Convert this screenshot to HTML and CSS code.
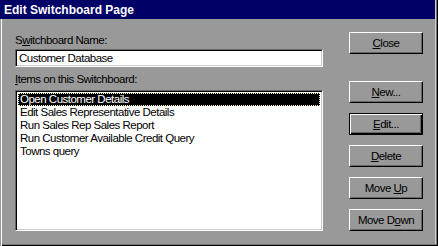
FILE: index.html
```html
<!DOCTYPE html>
<html lang="en">
<head>
    <meta charset="UTF-8">
    <title>Edit Switchboard Page</title>
    <link rel="stylesheet" href="styles.css">
</head>
<body>
    <div class="window">
        <div class="title-bar">Edit Switchboard Page</div>
        <div class="dialog">
            <div class="left-col">
                <label class="field-label">S<u>w</u>itchboard Name:</label>
                <div class="text-field">Customer Database</div>
                <label class="field-label items-label"><u>I</u>tems on this Switchboard:</label>
                <ul class="item-list">
                    <li class="selected">Open Customer Details</li>
                    <li>Edit Sales Representative Details</li>
                    <li>Run Sales Rep Sales Report</li>
                    <li>Run Customer Available Credit Query</li>
                    <li>Towns query</li>
                </ul>
            </div>
            <div class="right-col">
                <button class="btn"><u>C</u>lose</button>
                <button class="btn first-action"><u>N</u>ew...</button>
                <button class="btn default"><u>E</u>dit...</button>
                <button class="btn"><u>D</u>elete</button>
                <button class="btn">Move <u>U</u>p</button>
                <button class="btn">Move D<u>o</u>wn</button>
            </div>
        </div>
    </div>
</body>
</html>
```

FILE: styles.css
```css
body {
    margin: 0;
    padding: 0;
    background: #999999;
    font-family: "Liberation Sans", Arial, sans-serif;
    font-size: 11.5px;
    letter-spacing: -0.5px;
    color: #000;
}

.window {
    width: 438px;
    height: 246px;
    box-sizing: border-box;
    background: #999999;
    box-shadow:
        inset 1px 0 #999999,
        inset 2px 0 #ffffff,
        inset -1px -1px #000000,
        inset -2px -2px #777777,
        inset -3px 0 #cccccc;
}

.title-bar {
    height: 19px;
    width: 435px;
    box-sizing: border-box;
    padding: 1px 0 0 4px;
    line-height: 18px;
    background: #000066;
    color: #fff;
    font-size: 12px;
    font-weight: bold;
    letter-spacing: 0;
}

.dialog {
    display: flex;
    padding-left: 15px;
    gap: 26px;
}

.left-col {
    width: 308px;
    padding-top: 15px;
    display: flex;
    flex-direction: column;
}

.field-label {
    display: block;
    line-height: 13px;
    height: 13px;
}

.text-field {
    margin-top: 2px;
    height: 18px;
    box-sizing: border-box;
    background: #fff;
    border: 1px solid;
    border-color: #666 #fff #fff #666;
    box-shadow: inset 1px 1px #000, inset -1px -1px #ccc;
    padding: 1px 3px;
    line-height: 14px;
}

.items-label {
    margin-top: 6px;
}

.item-list {
    list-style: none;
    margin: 4px 0 0;
    padding: 2px 2px 0;
    height: 141px;
    box-sizing: border-box;
    background: #fff;
    border: 1px solid;
    border-color: #666 #fff #fff #666;
    box-shadow: inset 1px 1px #000, inset -1px -1px #ccc;
}

.item-list li {
    height: 13px;
    line-height: 13px;
    padding-left: 2px;
}

.item-list li.selected {
    background: #000;
    color: #fff;
    outline: 1px dotted #fff8c0;
    outline-offset: -1px;
}

.right-col {
    width: 74px;
    padding-top: 13px;
    display: flex;
    flex-direction: column;
    gap: 10px;
}

.btn {
    height: 22px;
    width: 74px;
    padding: 0;
    margin: 0;
    background: #999999;
    border: 1px solid;
    border-color: #fff #000 #000 #fff;
    box-shadow: inset -1px -1px #666;
    font-family: inherit;
    font-size: 11.5px;
    letter-spacing: -0.5px;
    color: #000;
    line-height: 18px;
}

.btn.first-action {
    margin-top: 17px;
}

.btn.default {
    border-color: #000;
    box-shadow: inset 1px 1px #fff, inset -1px -1px #000, inset -2px -2px #666;
}
```
